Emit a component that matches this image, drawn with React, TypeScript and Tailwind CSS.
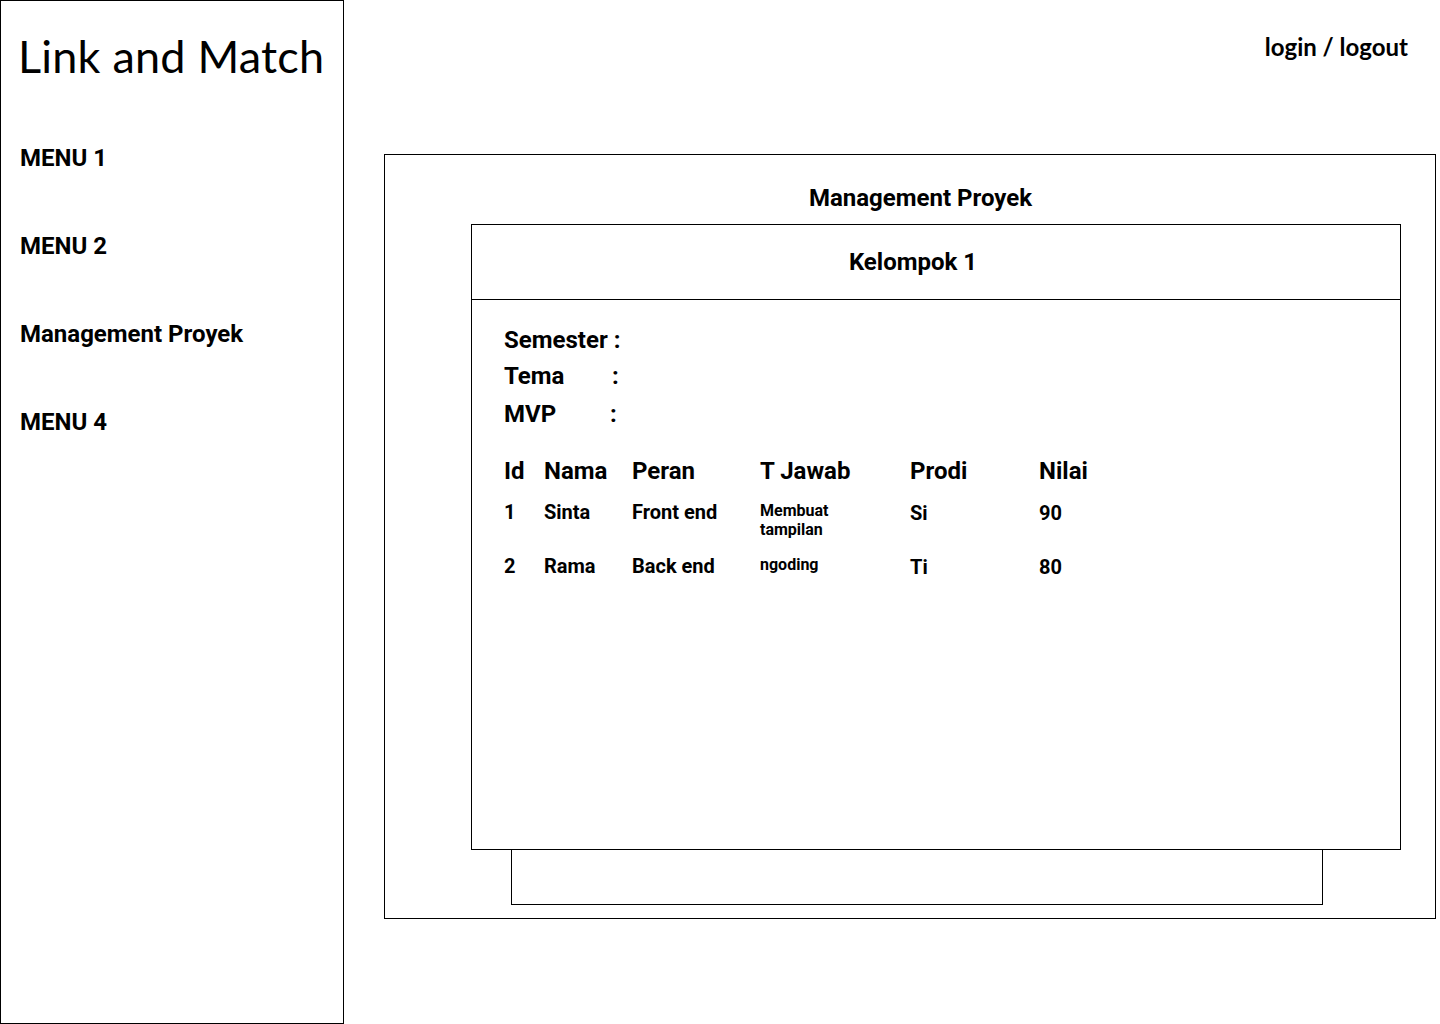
const rows = [
  { id: "1", nama: "Sinta", peran: "Front end", tjawab: ["Membuat", "tampilan"], prodi: "Si", nilai: "90" },
  { id: "2", nama: "Rama", peran: "Back end", tjawab: ["ngoding"], prodi: "Ti", nilai: "80" },
];

const menus = ["MENU 1", "MENU 2", "Management Proyek", "MENU 4"];

export default function App() {
  return (
    <div className="flex w-[1440px] h-[1024px] bg-white text-black font-['Roboto',sans-serif]">
      {/* Sidebar */}
      <aside className="w-[344px] h-[1024px] shrink-0 border border-black">
        <h1 className="pl-[17px] pt-[28px] text-[45px] leading-[54px] font-['Lato',sans-serif] font-normal tracking-[0.2px]">
          Link and Match
        </h1>
        <nav className="flex flex-col gap-[60px] pl-[19px] pt-[61px]">
          {menus.map((m) => (
            <a key={m} href="#" className="text-[24px] leading-[28px] font-bold">
              {m}
            </a>
          ))}
        </nav>
      </aside>

      {/* Main */}
      <main className="flex-1 flex flex-col">
        <div className="flex justify-end pr-[32px] pt-[33px] h-[154px]">
          <a href="#" className="text-[24px] leading-[28px] font-bold font-['Lato',sans-serif]">
            login / logout
          </a>
        </div>

        <section className="ml-[40px] w-[1052px] h-[765px] border border-black flex flex-col">
          <div className="h-[69px] pt-[29px] pl-[21px] text-center text-[24px] leading-[28px] font-bold">
            Management Proyek
          </div>

          <div className="ml-[86px] w-[930px] h-[626px] border border-black flex flex-col">
            <div className="h-[75px] shrink-0 border-b border-black flex items-center justify-center pr-[46px] text-[24px] font-bold">
              Kelompok 1
            </div>

            <div className="pl-[32px] pt-[26px]">
              <div className="flex text-[24px] leading-[28px] font-bold">
                <span>Semester :</span>
              </div>
              <div className="flex mt-[8px] text-[24px] leading-[28px] font-bold">
                <span className="w-[108px]">Tema</span>
                <span>:</span>
              </div>
              <div className="flex mt-[10px] text-[24px] leading-[28px] font-bold">
                <span className="w-[106px]">MVP</span>
                <span>:</span>
              </div>

              <div className="grid grid-cols-[40px_88px_128px_150px_129px_1fr] mt-[29px] text-[24px] leading-[28px] font-bold">
                <span>Id</span>
                <span>Nama</span>
                <span>Peran</span>
                <span>T Jawab</span>
                <span>Prodi</span>
                <span>Nilai</span>
              </div>

              {rows.map((r, i) => (
                <div
                  key={r.id}
                  className={`grid grid-cols-[40px_88px_128px_150px_129px_1fr] text-[20px] leading-[24px] font-bold ${
                    i === 0 ? "mt-[15px] h-[54px]" : ""
                  }`}
                >
                  <span>{r.id}</span>
                  <span>{r.nama}</span>
                  <span>{r.peran}</span>
                  <span className="text-[16px] leading-[19px] pt-[1px]">
                    {r.tjawab.map((t) => (
                      <span key={t} className="block">
                        {t}
                      </span>
                    ))}
                  </span>
                  <span className="pt-[1px]">{r.prodi}</span>
                  <span className="pt-[1px]">{r.nilai}</span>
                </div>
              ))}
            </div>
          </div>

          <div className="ml-[126px] w-[812px] h-[55px] border border-t-0 border-black" />
        </section>
      </main>
    </div>
  );
}
